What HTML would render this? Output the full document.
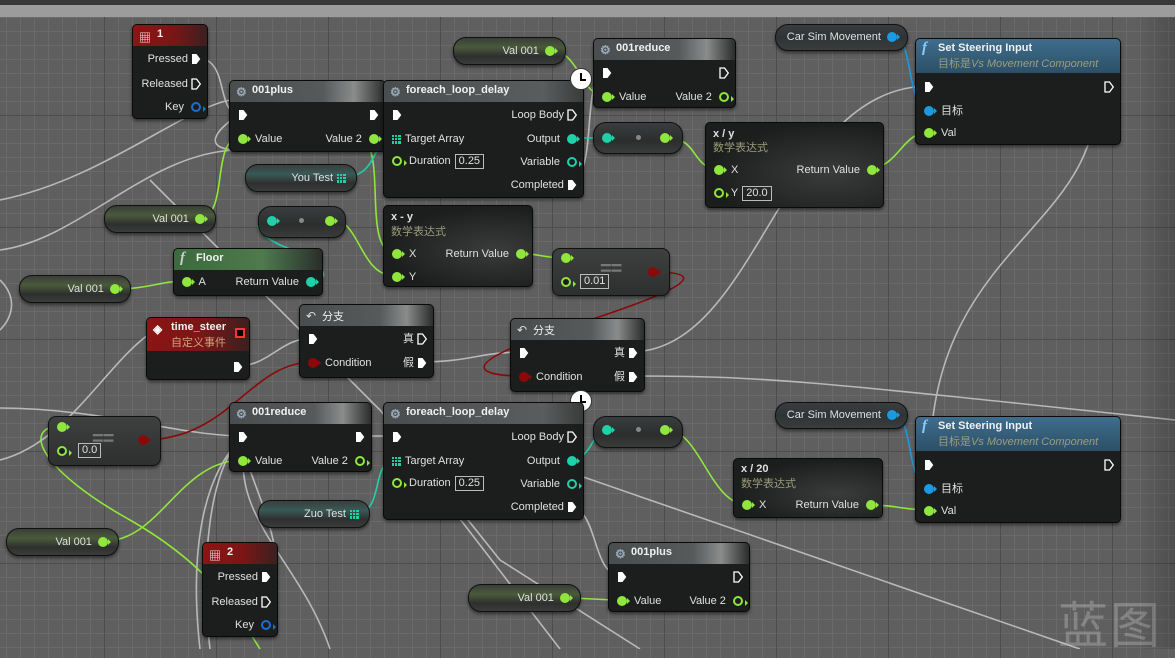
<!DOCTYPE html>
<html><head><meta charset="utf-8">
<style>
*{box-sizing:border-box;margin:0;padding:0}
body{width:1175px;height:649px;overflow:hidden;position:relative;font-family:"Liberation Sans","Noto Sans CJK SC",sans-serif;font-size:11px;color:#e0e0e0;
background-color:#5f5f5f;
background-image:linear-gradient(#4d4d4d 1px,transparent 1px),linear-gradient(90deg,#4d4d4d 1px,transparent 1px),linear-gradient(#6a6a6a 1px,transparent 1px),linear-gradient(90deg,#6a6a6a 1px,transparent 1px);
background-size:112px 112px,112px 112px,14px 14px,14px 14px;background-position:-8px 3px,-8px 3px,-8px 3px,-8px 3px}
.top1{position:absolute;left:0;top:0;width:1175px;height:5px;background:#383838}
.top2{position:absolute;left:0;top:5px;width:1175px;height:12px;background:#9c9c9c}
.vig{position:absolute;right:0;top:17px;width:40px;height:632px;background:linear-gradient(90deg,transparent,rgba(0,0,0,.18))}
svg.w{position:absolute;left:0;top:0}
.n{position:absolute;background:#1c1e1e;border:1px solid #0a0a0a;border-radius:5px;box-shadow:0 2px 3px rgba(0,0,0,.5)}
.h{height:21px;border-radius:4px 4px 0 0;padding:3px 0 0 22px;font-weight:bold;color:#f0f0f0;position:relative;white-space:nowrap}
.hg{background:linear-gradient(90deg,#4a4d4e 0%,#565a5a 60%,#8a8c8c 80%,#2b2d2d 100%)}
.hr{background:linear-gradient(90deg,#8d1414 0%,#7a1616 55%,#3a2020 100%)}
.hb{background:linear-gradient(180deg,#3f6d8c,#2c5068)}
.hf{background:linear-gradient(90deg,#3c6a3c,#4e7a4e 60%,#2a2e2c)}
.sub{display:block;font-weight:normal;color:#9c9c7a;font-size:11px;margin-top:1px}
.r{position:absolute;height:14px;line-height:14px;white-space:nowrap}
.l{left:8px}.rt{right:6px;text-align:right}
.ex{display:inline-block;width:10px;height:12px;vertical-align:middle}
.dp{display:inline-block;width:10px;height:10px;border-radius:50%;vertical-align:middle;position:relative;margin-right:4px}
.rt .dp{margin:0 0 0 4px}
.dp:after{content:"";position:absolute;left:10px;top:2px;border-left:3px solid;border-top:3px solid transparent;border-bottom:3px solid transparent;border-left-color:inherit}
.g{background:#8fe63c;border-color:#8fe63c}
.t{background:#20d0a8;border-color:#20d0a8}
.b{background:#1a9ae0;border-color:#1a9ae0}
.dr{background:#8a0a0a;border-color:#8a0a0a}
.ho{background:#1c1e1e;border:2px solid}
.hog{border-color:#8fe63c}.hot{border-color:#20d0a8}.hob{border-color:#1a6fd0}
.box{display:inline-block;border:1px solid #bbb;padding:0 3px;height:15px;line-height:13px;margin-left:4px;font-size:11px}
.p{position:absolute;height:28px;border-radius:13px;border:1px solid #111;background:linear-gradient(180deg,#3a3d3d,#2c2e2e 60%,#3a3c3c);box-shadow:0 2px 3px rgba(0,0,0,.5);text-align:right;padding-right:10px;line-height:26px;white-space:nowrap}
.pg{background:linear-gradient(180deg,#3a3e3a 0%,#4a5a3a 35%,#2e302e 70%,#3a3c3c)}
.pt{background:linear-gradient(180deg,#3a3e3e 0%,#3a5a55 35%,#2e3030 70%,#3a3c3c)}
.ic{position:absolute;left:6px;top:4px;font-size:12px;color:#9ab}
.grid{display:inline-block;width:9px;height:9px;vertical-align:middle;background:linear-gradient(90deg,#20d0a8 2px,transparent 2px 3px,#20d0a8 3px 5px,transparent 5px 6px,#20d0a8 6px);-webkit-mask:linear-gradient(#000 2px,transparent 2px 3px,#000 3px 5px,transparent 5px 6px,#000 6px);margin-left:4px}
.lgrid{margin:0 4px 0 0}
.clk{position:absolute;width:22px;height:22px;border-radius:50%;background:#fff;border:1px solid #333}
.clk:before{content:"";position:absolute;left:9px;top:4px;width:2px;height:8px;background:#000}
.clk:after{content:"";position:absolute;left:9px;top:10px;width:6px;height:2px;background:#000}
.eq{position:absolute;font-size:20px;color:#777;font-weight:bold;letter-spacing:-1px}
.wm{position:absolute;left:1058px;top:592px;font-size:50px;color:rgba(200,200,200,.35);font-family:"Noto Sans CJK SC",sans-serif;line-height:60px;letter-spacing:2px}
</style></head><body>
<div class="top1"></div><div class="top2"></div>
<div class="wm">蓝图</div>
<svg width="0" height="0" style="position:absolute"><defs>
<symbol id="ef" viewBox="0 0 10 12"><path d="M1 1h4.5l3.8 5-3.8 5H1z" fill="#fff"/></symbol>
<symbol id="eh" viewBox="0 0 10 12"><path d="M1 1h4.5l3.8 5-3.8 5H1z" fill="none" stroke="#fff" stroke-width="1.3"/></symbol>
</defs></svg>
<svg class="w" width="1175" height="649" fill="none" stroke-width="2">
<g stroke="#c8c8c8" stroke-width="1.6" opacity=".85">
<path d="M0 250 C80 240 150 150 240 150 C200 150 215 130 240 114"/>
<path d="M197 58 C230 58 215 114 240 114"/>
<path d="M357 114 L395 114"/>
<path d="M567 184 C600 184 580 72 605 72"/>
<path d="M0 200 C100 180 180 110 230 100"/>
<path d="M630 352 C760 352 780 86 930 86"/>
<path d="M237 366 C270 366 280 338 313 338"/>
<path d="M420 362 C470 362 480 352 524 352"/>
<path d="M630 376 C760 376 800 380 1175 420"/>
<path d="M0 408 C100 408 180 436 243 436"/>
<path d="M357 436 L395 436"/>
<path d="M567 506 C600 506 590 576 622 576"/>
<path d="M260 577 C300 577 250 480 240 440"/>
<path d="M240 440 C200 480 190 560 200 649"/>
<path d="M240 440 C210 470 200 560 210 649"/>
<path d="M245 440 C230 520 300 560 330 649"/>
<path d="M150 180 L380 410 L500 560 L640 649"/>
<path d="M430 480 L560 649"/>
<path d="M1095 80 C1110 230 930 240 930 464"/>
<path d="M0 280 C20 300 10 320 0 330"/>
<path d="M390 410 L1080 649"/>
<path d="M 0 460 C 80 440 120 330 180 320"/>
</g>
<g stroke="#8fe63c" stroke-width="1.6">
<path d="M198 219 C230 219 210 138 240 138"/>
<path d="M357 138 C390 138 360 253 395 253"/>
<path d="M333 220 C360 220 360 276 395 276"/>
<path d="M549 50 C580 50 580 96 605 96"/>
<path d="M667 138 C700 138 690 169 720 169"/>
<path d="M866 169 C900 169 900 132 930 132"/>
<path d="M514 253 C540 253 540 258 566 258"/>
<path d="M114 289 C150 289 160 281 186 281"/>
<path d="M105 541 C160 541 180 460 243 460"/>
<path d="M62 426 C20 426 40 470 130 520 C200 560 230 600 260 649"/>
<path d="M667 430 C700 430 710 505 748 505"/>
<path d="M866 505 C900 505 900 510 930 510"/>
<path d="M562 598 C590 598 595 600 622 600"/>
</g>
<g stroke="#20d0a8" stroke-width="1.6">
<path d="M343 177 C380 177 370 138 395 138"/>
<path d="M567 138 L607 138"/>
<path d="M307 281 C340 281 320 260 280 245 C250 230 255 220 272 220"/>
<path d="M356 513 C385 513 370 460 395 460"/>
<path d="M567 460 C595 460 590 430 607 430"/>
</g>
<g stroke="#1a9ae0" stroke-width="1.6">
<path d="M893 37 C915 37 905 110 930 110"/>
<path d="M893 415 C915 415 905 488 930 488"/>
</g>
<g stroke="#8a0a0a" stroke-width="1.6">
<path d="M653 272 C740 272 620 310 560 330 C440 370 490 376 524 376"/>
<path d="M143 440 C230 440 250 362 313 362"/>
</g>
</svg>

<div class="n" style="left:132px;top:24px;width:76px;height:95px">
<div class="h hr" style="padding-left:24px"><span class="ic" style="color:#ddd">▦</span>1</div>
<div class="r rt" style="top:27px">Pressed <svg class="ex"><use href="#ef"/></svg></div>
<div class="r rt" style="top:52px">Released <svg class="ex"><use href="#eh"/></svg></div>
<div class="r rt" style="top:75px">Key <i class="dp ho hob"></i></div>
</div>
<div class="n" style="left:229px;top:80px;width:157px;height:72px">
<div class="h hg"><span class="ic">⚙</span>001plus</div>
<div class="r l" style="top:27px"><svg class="ex"><use href="#ef"/></svg></div>
<div class="r rt" style="top:27px"><svg class="ex"><use href="#ef"/></svg></div>
<div class="r l" style="top:51px"><i class="dp g"></i> Value</div>
<div class="r rt" style="top:51px">Value 2 <i class="dp g"></i></div>
</div>
<div class="n" style="left:383px;top:80px;width:201px;height:118px">
<div class="h hg" style="background:linear-gradient(90deg,#4a4d4e,#5a5d5d 80%,#3a3c3c)"><span class="ic">⚙</span>foreach_loop_delay</div>
<div class="r l" style="top:27px"><svg class="ex"><use href="#ef"/></svg></div>
<div class="r rt" style="top:27px">Loop Body <svg class="ex"><use href="#eh"/></svg></div>
<div class="r l" style="top:51px"><i class="grid lgrid"></i>Target Array</div>
<div class="r rt" style="top:51px">Output <i class="dp t"></i></div>
<div class="r l" style="top:73px"><i class="dp ho hog"></i> Duration<span class="box">0.25</span></div>
<div class="r rt" style="top:74px">Variable <i class="dp ho hot"></i></div>
<div class="r rt" style="top:97px">Completed <svg class="ex"><use href="#ef"/></svg></div>
</div>
<div class="clk" style="left:570px;top:68px"></div>
<div class="p pg" style="left:453px;top:37px;width:113px">Val 001 <i class="dp g" style="margin:0 0 0 3px"></i></div>
<div class="n" style="left:593px;top:38px;width:143px;height:70px">
<div class="h hg"><span class="ic">⚙</span>001reduce</div>
<div class="r l" style="top:27px"><svg class="ex"><use href="#ef"/></svg></div>
<div class="r rt" style="top:27px"><svg class="ex"><use href="#eh"/></svg></div>
<div class="r l" style="top:51px"><i class="dp g"></i> Value</div>
<div class="r rt" style="top:51px">Value 2 <i class="dp ho hog"></i></div>
</div>
<div class="p" style="left:775px;top:24px;width:133px;height:27px;line-height:25px;background:linear-gradient(180deg,#3a3d3f,#2e3436 50%,#3a3c3c)">Car Sim Movement <i class="dp b" style="margin:0 0 0 3px"></i></div>
<div class="p" style="left:775px;top:402px;width:133px;height:27px;line-height:25px;background:linear-gradient(180deg,#3a3d3f,#2e3436 50%,#3a3c3c)">Car Sim Movement <i class="dp b" style="margin:0 0 0 3px"></i></div>
<div class="n" style="left:915px;top:38px;width:206px;height:107px">
<div class="h hb" style="height:34px"><span class="ic" style="color:#8cf;font-style:italic;font-family:'Liberation Serif',serif;font-size:15px;top:1px">f</span>Set Steering Input<span class="sub">目标是<i>Vs Movement Component</i></span></div>
<div class="r l" style="top:41px"><svg class="ex"><use href="#ef"/></svg></div>
<div class="r rt" style="top:41px"><svg class="ex"><use href="#eh"/></svg></div>
<div class="r l" style="top:65px"><i class="dp b"></i> 目标</div>
<div class="r l" style="top:87px"><i class="dp g"></i> Val</div>
</div>
<div class="n" style="left:915px;top:416px;width:206px;height:107px">
<div class="h hb" style="height:34px"><span class="ic" style="color:#8cf;font-style:italic;font-family:'Liberation Serif',serif;font-size:15px;top:1px">f</span>Set Steering Input<span class="sub">目标是<i>Vs Movement Component</i></span></div>
<div class="r l" style="top:41px"><svg class="ex"><use href="#ef"/></svg></div>
<div class="r rt" style="top:41px"><svg class="ex"><use href="#eh"/></svg></div>
<div class="r l" style="top:65px"><i class="dp b"></i> 目标</div>
<div class="r l" style="top:87px"><i class="dp g"></i> Val</div>
</div>
<div class="n" style="left:705px;top:122px;width:179px;height:86px;background:radial-gradient(ellipse at 70% 60%,#3a3c3c,#1c1e1e 70%)">
<div class="r" style="left:7px;top:4px;font-weight:bold">x / y</div>
<div class="r" style="left:7px;top:18px;color:#9c9c7a">数学表达式</div>
<div class="r l" style="top:40px"><i class="dp g"></i> X</div>
<div class="r rt" style="top:40px">Return Value <i class="dp g"></i></div>
<div class="r l" style="top:63px"><i class="dp ho hog"></i> Y<span class="box">20.0</span></div>
</div>
<div class="p" style="left:593px;top:122px;width:90px;height:32px"></div>
<i class="dp t" style="position:absolute;left:602px;top:133px"></i><i style="position:absolute;left:636px;top:135px;width:5px;height:5px;border-radius:50%;background:#888"></i><i class="dp g" style="position:absolute;left:660px;top:133px"></i>
<div class="p pt" style="left:245px;top:164px;width:112px">You Test<i class="grid"></i></div>
<div class="p pg" style="left:104px;top:205px;width:112px">Val 001 <i class="dp g" style="margin:0 0 0 3px"></i></div>
<div class="p" style="left:258px;top:206px;width:88px;height:32px"></div>
<i class="dp t" style="position:absolute;left:267px;top:216px"></i><i style="position:absolute;left:299px;top:218px;width:5px;height:5px;border-radius:50%;background:#888"></i><i class="dp g" style="position:absolute;left:325px;top:216px"></i>
<div class="n" style="left:383px;top:205px;width:150px;height:82px;background:radial-gradient(ellipse at 75% 55%,#3a3c3c,#1c1e1e 70%)">
<div class="r" style="left:7px;top:4px;font-weight:bold">x - y</div>
<div class="r" style="left:7px;top:19px;color:#9c9c7a">数学表达式</div>
<div class="r l" style="top:41px"><i class="dp g"></i> X</div>
<div class="r rt" style="top:41px">Return Value <i class="dp g"></i></div>
<div class="r l" style="top:64px"><i class="dp g"></i> Y</div>
</div>
<div class="n" style="left:173px;top:248px;width:150px;height:48px">
<div class="h hf"><span class="ic" style="color:#ccc;font-style:italic;font-family:'Liberation Serif',serif;font-size:15px;top:1px">f</span>Floor</div>
<div class="r l" style="top:26px"><i class="dp g"></i> A</div>
<div class="r rt" style="top:26px">Return Value <i class="dp t"></i></div>
</div>
<div class="p pg" style="left:19px;top:275px;width:112px">Val 001 <i class="dp g" style="margin:0 0 0 3px"></i></div>
<div class="p" style="left:552px;top:248px;width:118px;height:48px;border-radius:8px;background:linear-gradient(180deg,#3e4040,#2e3030)"></div>
<i class="dp g" style="position:absolute;left:561px;top:253px"></i>
<i class="dp ho hog" style="position:absolute;left:561px;top:277px"></i><span class="box" style="position:absolute;left:580px;top:274px;margin:0">0.01</span>
<span class="eq" style="left:600px;top:258px">==</span>
<i class="dp dr" style="position:absolute;left:648px;top:267px"></i>
<div class="n" style="left:146px;top:317px;width:104px;height:63px">
<div class="h hr" style="height:33px;padding-left:24px"><span class="ic" style="color:#fff">◈</span>time_steer<span class="sub" style="color:#d0a080">自定义事件</span>
<i style="position:absolute;right:4px;top:10px;width:10px;height:10px;border:2px solid #f33;background:#000"></i></div>
<div class="r rt" style="top:42px"><svg class="ex"><use href="#ef"/></svg></div>
</div>
<div class="n" style="left:299px;top:304px;width:135px;height:74px">
<div class="h hg" style="font-weight:normal"><span class="ic" style="color:#ddd">↶</span>分支</div>
<div class="r l" style="top:27px"><svg class="ex"><use href="#ef"/></svg></div>
<div class="r rt" style="top:27px">真 <svg class="ex"><use href="#eh"/></svg></div>
<div class="r l" style="top:51px"><i class="dp dr"></i> Condition</div>
<div class="r rt" style="top:51px">假 <svg class="ex"><use href="#ef"/></svg></div>
</div>
<div class="n" style="left:510px;top:318px;width:135px;height:74px">
<div class="h hg" style="font-weight:normal"><span class="ic" style="color:#ddd">↶</span>分支</div>
<div class="r l" style="top:27px"><svg class="ex"><use href="#ef"/></svg></div>
<div class="r rt" style="top:27px">真 <svg class="ex"><use href="#ef"/></svg></div>
<div class="r l" style="top:51px"><i class="dp dr"></i> Condition</div>
<div class="r rt" style="top:51px">假 <svg class="ex"><use href="#ef"/></svg></div>
</div>
<div class="clk" style="left:570px;top:390px"></div>
<div class="p" style="left:48px;top:416px;width:113px;height:50px;border-radius:8px;background:linear-gradient(180deg,#3e4040,#2e3030)"></div>
<i class="dp g" style="position:absolute;left:57px;top:422px"></i>
<i class="dp ho hog" style="position:absolute;left:57px;top:446px"></i><span class="box" style="position:absolute;left:78px;top:443px;margin:0">0.0</span>
<span class="eq" style="left:92px;top:428px">==</span>
<i class="dp dr" style="position:absolute;left:138px;top:435px"></i>
<div class="n" style="left:229px;top:402px;width:143px;height:70px">
<div class="h hg"><span class="ic">⚙</span>001reduce</div>
<div class="r l" style="top:27px"><svg class="ex"><use href="#ef"/></svg></div>
<div class="r rt" style="top:27px"><svg class="ex"><use href="#ef"/></svg></div>
<div class="r l" style="top:51px"><i class="dp g"></i> Value</div>
<div class="r rt" style="top:51px">Value 2 <i class="dp ho hog"></i></div>
</div>
<div class="n" style="left:383px;top:402px;width:201px;height:118px">
<div class="h hg" style="background:linear-gradient(90deg,#4a4d4e,#5a5d5d 80%,#3a3c3c)"><span class="ic">⚙</span>foreach_loop_delay</div>
<div class="r l" style="top:27px"><svg class="ex"><use href="#ef"/></svg></div>
<div class="r rt" style="top:27px">Loop Body <svg class="ex"><use href="#eh"/></svg></div>
<div class="r l" style="top:51px"><i class="grid lgrid"></i>Target Array</div>
<div class="r rt" style="top:51px">Output <i class="dp t"></i></div>
<div class="r l" style="top:73px"><i class="dp ho hog"></i> Duration<span class="box">0.25</span></div>
<div class="r rt" style="top:74px">Variable <i class="dp ho hot"></i></div>
<div class="r rt" style="top:97px">Completed <svg class="ex"><use href="#ef"/></svg></div>
</div>
<div class="p" style="left:593px;top:416px;width:90px;height:32px"></div>
<i class="dp t" style="position:absolute;left:602px;top:425px"></i><i style="position:absolute;left:636px;top:427px;width:5px;height:5px;border-radius:50%;background:#888"></i><i class="dp g" style="position:absolute;left:660px;top:425px"></i>
<div class="n" style="left:733px;top:458px;width:150px;height:60px;background:radial-gradient(ellipse at 70% 60%,#3a3c3c,#1c1e1e 70%)">
<div class="r" style="left:7px;top:3px;font-weight:bold">x / 20</div>
<div class="r" style="left:7px;top:18px;color:#9c9c7a">数学表达式</div>
<div class="r l" style="top:39px"><i class="dp g"></i> X</div>
<div class="r rt" style="top:39px">Return Value <i class="dp g"></i></div>
</div>
<div class="p pt" style="left:258px;top:500px;width:112px">Zuo Test<i class="grid"></i></div>
<div class="p pg" style="left:6px;top:528px;width:113px">Val 001 <i class="dp g" style="margin:0 0 0 3px"></i></div>
<div class="n" style="left:202px;top:542px;width:76px;height:95px">
<div class="h hr" style="padding-left:24px"><span class="ic" style="color:#ddd">▦</span>2</div>
<div class="r rt" style="top:27px">Pressed <svg class="ex"><use href="#ef"/></svg></div>
<div class="r rt" style="top:52px">Released <svg class="ex"><use href="#eh"/></svg></div>
<div class="r rt" style="top:75px">Key <i class="dp ho hob"></i></div>
</div>
<div class="n" style="left:608px;top:542px;width:142px;height:70px">
<div class="h hg"><span class="ic">⚙</span>001plus</div>
<div class="r l" style="top:27px"><svg class="ex"><use href="#ef"/></svg></div>
<div class="r rt" style="top:27px"><svg class="ex"><use href="#eh"/></svg></div>
<div class="r l" style="top:51px"><i class="dp g"></i> Value</div>
<div class="r rt" style="top:51px">Value 2 <i class="dp ho hog"></i></div>
</div>
<div class="p pg" style="left:468px;top:584px;width:113px">Val 001 <i class="dp g" style="margin:0 0 0 3px"></i></div>
<div class="vig"></div>
</body></html>
